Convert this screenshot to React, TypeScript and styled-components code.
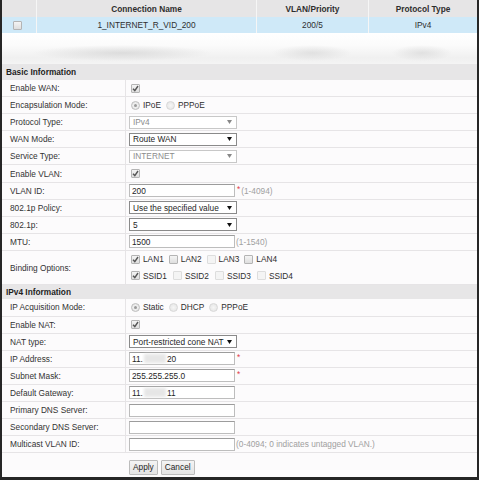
import React from 'react'
import styled, { createGlobalStyle } from 'styled-components'

const GlobalStyle = createGlobalStyle`
  html, body {
    margin: 0;
    padding: 0;
    background: #ffffff;
  }
  body {
    font-family: "Liberation Sans", Arial, sans-serif;
    font-size: 8.3px;
    color: #2e2e2e;
  }
`

const Frame = styled.div`
  width: 479px;
  height: 480px;
  box-sizing: border-box;
  border-left: 2px solid #262626;
  border-right: 2px solid #262626;
  border-bottom: 3px solid #262626;
  background: #fcfbfc;
  display: flex;
  flex-direction: column;
  overflow: hidden;
`

// connection list on top
const ListGrid = styled.div<{ $bg: string; $h: number }>`
  display: grid;
  grid-template-columns: 34px 220px 112px 1fr;
  height: ${({ $h }) => $h}px;
  background: ${({ $bg }) => $bg};
`

const ListCell = styled.div<{ $bold?: boolean }>`
  display: flex;
  align-items: center;
  justify-content: center;
  font-weight: ${({ $bold }) => ($bold ? 700 : 400)};
  border-left: 1px solid #f6f6f6;
  &:first-child {
    border-left: none;
    justify-content: flex-start;
    padding-left: 8px;
  }
`

const BlurredRows = styled.div`
  height: 31px;
  background:
    radial-gradient(ellipse 90px 8px at 120px 20px, rgba(200, 200, 200, 0.55), transparent),
    radial-gradient(ellipse 40px 8px at 310px 20px, rgba(205, 205, 205, 0.5), transparent),
    radial-gradient(ellipse 30px 8px at 420px 20px, rgba(205, 205, 205, 0.5), transparent),
    linear-gradient(#ffffff 0%, #fbfbfb 40%, #f0f0f0 80%, #f4f4f4 100%);
`

const SectionHeader = styled.div<{ $h: number }>`
  height: ${({ $h }) => $h}px;
  display: flex;
  align-items: center;
  padding-left: 4px;
  background: #e7e6e7;
  font-weight: 700;
  color: #1e1e1e;
`

const Row = styled.div<{ $h?: number }>`
  display: grid;
  grid-template-columns: 124px 1fr;
  height: ${({ $h }) => $h ?? 17.1}px;
  border-bottom: 1px solid #e6e4e6;
  box-sizing: border-box;
`

const Label = styled.div`
  display: flex;
  align-items: center;
  padding-left: 8px;
  border-right: 1px solid #e6e4e6;
  color: #333333;
`

const Value = styled.div<{ $column?: boolean }>`
  display: flex;
  flex-direction: ${({ $column }) => ($column ? 'column' : 'row')};
  justify-content: ${({ $column }) => ($column ? 'center' : 'flex-start')};
  align-items: ${({ $column }) => ($column ? 'flex-start' : 'center')};
  padding-left: 2px;
`

const Line = styled.div`
  display: flex;
  align-items: center;
  height: 16.5px;
`

const Box = styled.span<{ $faded?: boolean }>`
  width: 7px;
  height: 7px;
  border: 1px solid ${({ $faded }) => ($faded ? '#dddddd' : '#b4b4b4')};
  border-radius: 1px;
  background: ${({ $faded }) => ($faded ? '#f4f4f4' : 'linear-gradient(#f4f4f4, #dedede)')};
  display: inline-flex;
  align-items: center;
  justify-content: center;
  margin: 0 3px 0 3px;
  flex: none;
`

function Check({ checked, faded }: { checked?: boolean; faded?: boolean }) {
  return (
    <Box $faded={faded}>
      {checked && (
        <svg width="7" height="7" viewBox="0 0 7 7">
          <path d="M1 3.8 L2.8 5.6 L6 1" stroke="#555" strokeWidth="1.4" fill="none" />
        </svg>
      )}
    </Box>
  )
}

const Dot = styled.span<{ $faded?: boolean }>`
  width: 7px;
  height: 7px;
  border-radius: 50%;
  border: 1px solid ${({ $faded }) => ($faded ? '#d8d8d8' : '#bdbdbd')};
  background: radial-gradient(circle, #f6f6f6, #e2e2e2);
  display: inline-flex;
  align-items: center;
  justify-content: center;
  margin: 0 3px 0 3px;
  flex: none;
  &::after {
    content: '';
    width: 3px;
    height: 3px;
    border-radius: 50%;
    background: ${({ $faded }) => ($faded ? 'transparent' : '#9a9a9a')};
  }
`

const OptText = styled.span<{ $gap?: number }>`
  margin-right: ${({ $gap }) => $gap ?? 2}px;
  color: #2e2e2e;
`

const Select = styled.div<{ $disabled?: boolean }>`
  width: 108px;
  height: 13px;
  box-sizing: border-box;
  border: 1px solid ${({ $disabled }) => ($disabled ? '#c8c8c8' : '#8a8a8a')};
  background: #ffffff;
  color: ${({ $disabled }) => ($disabled ? '#8c8c8c' : '#1e1e1e')};
  display: flex;
  align-items: center;
  justify-content: space-between;
  padding: 0 4px 0 3px;
  margin-left: 1px;
`

function Dropdown({ text, disabled }: { text: string; disabled?: boolean }) {
  return (
    <Select $disabled={disabled}>
      <span>{text}</span>
      <svg width="5" height="4" viewBox="0 0 5 4">
        <path d="M0 0 H5 L2.5 4 Z" fill={disabled ? '#888' : '#111'} />
      </svg>
    </Select>
  )
}

const TextBox = styled.div`
  width: 106px;
  height: 13px;
  box-sizing: border-box;
  border: 1px solid #bdbdbd;
  border-top-color: #9c9c9c;
  background: #ffffff;
  display: flex;
  align-items: center;
  padding-left: 2px;
  margin-left: 1px;
  color: #1e1e1e;
  flex: none;
`

const Smudge = styled.span`
  display: inline-block;
  width: 22px;
  height: 9px;
  background: #e6e6e6;
  filter: blur(1.5px);
  margin: 0 1px;
`

const Hint = styled.span`
  color: #a0a0a0;
  margin-left: 1px;
`

const Star = styled.span`
  color: #e0404a;
  margin-left: 2px;
  align-self: flex-start;
  margin-top: 1px;
`

const ButtonRow = styled.div`
  height: 23px;
  display: flex;
  align-items: center;
  padding-left: 127px;
  gap: 3px;
`

const Button = styled.button`
  font-family: inherit;
  font-size: 8.3px;
  color: #1e1e1e;
  height: 15px;
  padding: 0 3px;
  border: 1px solid #bcbcbc;
  border-radius: 1px;
  background: linear-gradient(#f4f4f4, #e4e4e4);
  margin-top: 5px;
`

function FieldRow({ label, children, h, column }: { label: string; children: React.ReactNode; h?: number; column?: boolean }) {
  return (
    <Row $h={h}>
      <Label>{label}</Label>
      <Value $column={column}>{children}</Value>
    </Row>
  )
}

export default function App() {
  return (
    <Frame>
      <GlobalStyle />
      <ListGrid $bg="#e6e5e6" $h={17}>
        <ListCell />
        <ListCell $bold>Connection Name</ListCell>
        <ListCell $bold>VLAN/Priority</ListCell>
        <ListCell $bold>Protocol Type</ListCell>
      </ListGrid>
      <ListGrid $bg="#cfe9f8" $h={16}>
        <ListCell>
          <Check />
        </ListCell>
        <ListCell>1_INTERNET_R_VID_200</ListCell>
        <ListCell>200/5</ListCell>
        <ListCell>IPv4</ListCell>
      </ListGrid>
      <BlurredRows />

      <SectionHeader $h={16}>Basic Information</SectionHeader>
      <FieldRow label="Enable WAN:">
        <Check checked />
      </FieldRow>
      <FieldRow label="Encapsulation Mode:">
        <Dot />
        <OptText>IPoE</OptText>
        <Dot $faded />
        <OptText>PPPoE</OptText>
      </FieldRow>
      <FieldRow label="Protocol Type:">
        <Dropdown text="IPv4" disabled />
      </FieldRow>
      <FieldRow label="WAN Mode:">
        <Dropdown text="Route WAN" />
      </FieldRow>
      <FieldRow label="Service Type:">
        <Dropdown text="INTERNET" disabled />
      </FieldRow>
      <FieldRow label="Enable VLAN:">
        <Check checked />
      </FieldRow>
      <FieldRow label="VLAN ID:">
        <TextBox>200</TextBox>
        <Star>*</Star>
        <Hint>(1-4094)</Hint>
      </FieldRow>
      <FieldRow label="802.1p Policy:">
        <Dropdown text="Use the specified value" />
      </FieldRow>
      <FieldRow label="802.1p:">
        <Dropdown text="5" />
      </FieldRow>
      <FieldRow label="MTU:">
        <TextBox>1500</TextBox>
        <Hint>(1-1540)</Hint>
      </FieldRow>
      <FieldRow label="Binding Options:" h={34.5} column>
        <Line>
          <Check checked />
          <OptText>LAN1</OptText>
          <Check />
          <OptText>LAN2</OptText>
          <Check faded />
          <OptText>LAN3</OptText>
          <Check />
          <OptText>LAN4</OptText>
        </Line>
        <Line>
          <Check checked />
          <OptText $gap={3}>SSID1</OptText>
          <Check faded />
          <OptText $gap={3}>SSID2</OptText>
          <Check faded />
          <OptText $gap={3}>SSID3</OptText>
          <Check faded />
          <OptText>SSID4</OptText>
        </Line>
      </FieldRow>

      <SectionHeader $h={14}>IPv4 Information</SectionHeader>
      <FieldRow label="IP Acquisition Mode:">
        <Dot />
        <OptText>Static</OptText>
        <Dot $faded />
        <OptText>DHCP</OptText>
        <Dot $faded />
        <OptText>PPPoE</OptText>
      </FieldRow>
      <FieldRow label="Enable NAT:">
        <Check checked />
      </FieldRow>
      <FieldRow label="NAT type:">
        <Dropdown text="Port-restricted cone NAT" />
      </FieldRow>
      <FieldRow label="IP Address:">
        <TextBox>
          11.<Smudge />20
        </TextBox>
        <Star>*</Star>
      </FieldRow>
      <FieldRow label="Subnet Mask:">
        <TextBox>255.255.255.0</TextBox>
        <Star>*</Star>
      </FieldRow>
      <FieldRow label="Default Gateway:">
        <TextBox>
          11.<Smudge />11
        </TextBox>
      </FieldRow>
      <FieldRow label="Primary DNS Server:">
        <TextBox />
      </FieldRow>
      <FieldRow label="Secondary DNS Server:">
        <TextBox />
      </FieldRow>
      <FieldRow label="Multicast VLAN ID:">
        <TextBox />
        <Hint>(0-4094; 0 indicates untagged VLAN.)</Hint>
      </FieldRow>
      <ButtonRow>
        <Button>Apply</Button>
        <Button>Cancel</Button>
      </ButtonRow>
    </Frame>
  )
}
